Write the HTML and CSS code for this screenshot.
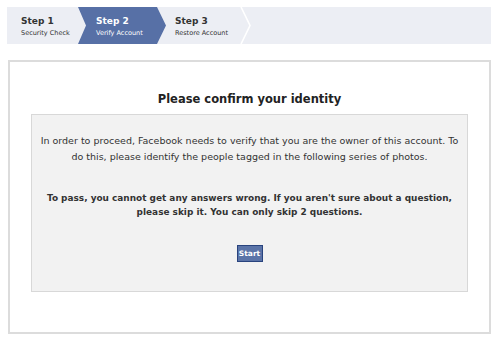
FILE: index.html
```html
<!DOCTYPE html>
<html>
<head>
<meta charset="utf-8">
<link rel="stylesheet" href="styles.css">
</head>
<body>
<div class="steps">
  <div class="step step-first">
    <div class="step-title">Step 1</div>
    <div class="step-sub">Security Check</div>
  </div>
  <div class="step step-active">
    <div class="step-title">Step 2</div>
    <div class="step-sub">Verify Account</div>
  </div>
  <div class="step step-third">
    <div class="step-title">Step 3</div>
    <div class="step-sub">Restore Account</div>
  </div>
  <svg class="sep" width="12" height="37" viewBox="0 0 12 37"><polyline points="1,0 10,18.5 1,37" fill="none" stroke="#ffffff" stroke-width="1.6"/></svg>
</div>
<div class="panel">
  <h1 class="title">Please confirm your identity</h1>
  <div class="infobox">
    <p class="intro">In order to proceed, Facebook needs to verify that you are the owner of this account. To do this, please identify the people tagged in the following series of photos.</p>
    <p class="rules">To pass, you cannot get any answers wrong. If you aren't sure about a question, please skip it. You can only skip 2 questions.</p>
    <div class="actions"><button class="btn">Start</button></div>
  </div>
</div>
</body>
</html>
```

FILE: styles.css
```css
html, body {
  margin: 0;
  padding: 0;
  background: #ffffff;
  font-family: "DejaVu Sans", "Noto Sans", sans-serif;
  color: #333333;
}

.steps {
  display: flex;
  align-items: stretch;
  margin: 7px 9px 0 7px;
  height: 37px;
  background: #eceef4;
}

.step {
  box-sizing: border-box;
  display: flex;
  flex-direction: column;
  justify-content: center;
  padding-top: 1px;
}

.step-first {
  width: 71px;
  padding-left: 14px;
}

.step-active {
  width: 88px;
  padding-left: 18px;
  background: #5770a6;
  color: #ffffff;
  clip-path: polygon(0 0, 79px 0, 88px 50%, 79px 100%, 0 100%, 8px 50%);
}

.step-third {
  width: 74px;
  padding-left: 9px;
}

.sep {
  display: block;
  flex: none;
}

.step-title {
  font-size: 9px;
  font-weight: bold;
  line-height: 12px;
}

.step-sub {
  font-size: 6.5px;
  line-height: 10px;
  margin-top: 1px;
}

.step-first .step-title,
.step-third .step-title { color: #333333; }

.panel {
  margin: 16px 9px 11px 8px;
  border: 2px solid #dcdcdc;
  padding: 28px 21px 40px;
}

.title {
  margin: 0 0 6px;
  text-align: center;
  font-size: 11.5px;
  line-height: 18px;
  font-weight: bold;
  color: #222222;
}

.infobox {
  background: #f2f2f2;
  border: 1px solid #d8d8d8;
  padding: 18px 6px 29px;
  text-align: center;
}

.intro {
  margin: 0;
  font-size: 9.5px;
  line-height: 16px;
}

.rules {
  margin: 26px 0 0;
  font-size: 8.93px;
  line-height: 14px;
  font-weight: bold;
}

.actions {
  margin-top: 26px;
  display: flex;
  justify-content: center;
}

.btn {
  box-sizing: border-box;
  height: 17px;
  width: 26px;
  padding: 0;
  background: #5b74a8;
  border: 1px solid #29447e;
  color: #ffffff;
  font-family: "DejaVu Sans", sans-serif;
  font-weight: bold;
  font-size: 7.5px;
  line-height: 15px;
}
```
